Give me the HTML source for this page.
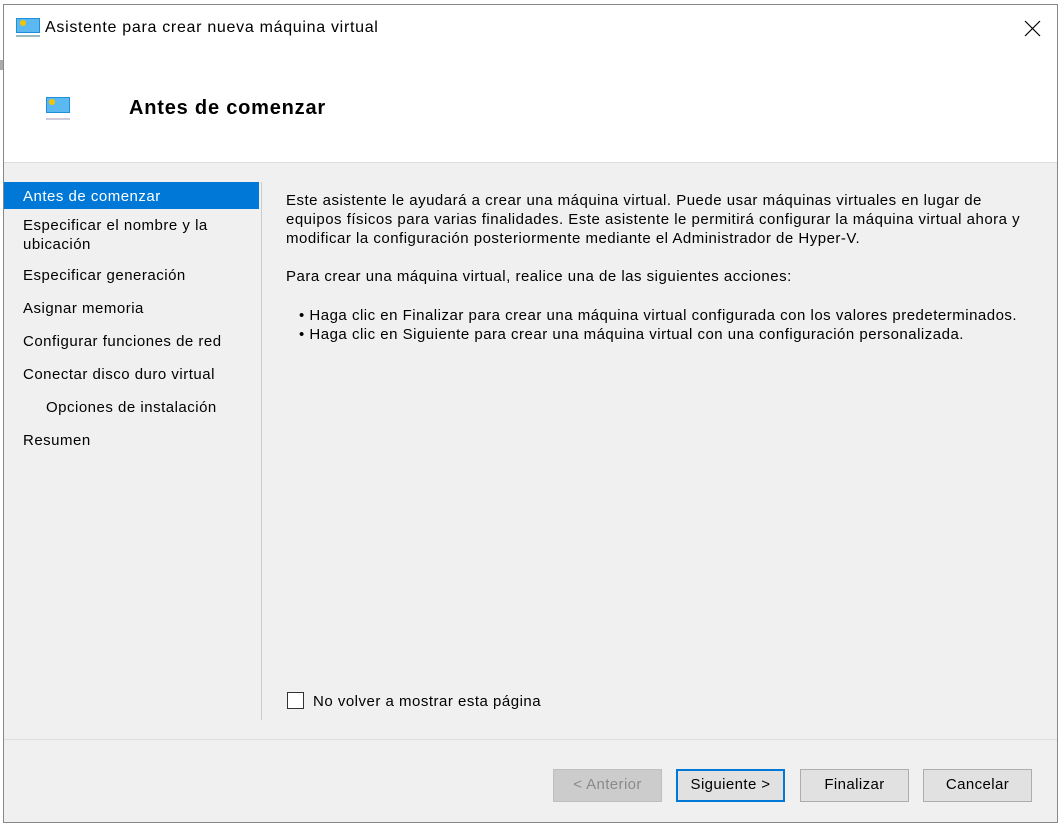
<!DOCTYPE html>
<html><head><meta charset="utf-8"><style>
body{margin:0;width:1063px;height:827px;background:#e8e8e8;position:relative;overflow:hidden;font-family:"Liberation Sans",sans-serif;color:#000}
.a{position:absolute;white-space:nowrap}
#win{position:absolute;left:3px;top:4px;width:1053px;height:817px;border:1px solid #888;background:#f0f0f0}
.t{font-size:15px;line-height:19px;letter-spacing:0.5px}
.btn{position:absolute;top:764px;width:107px;height:31px;border:1px solid #adadad;background:#e1e1e1;font-size:15px;letter-spacing:0.4px;text-align:center;line-height:31px}
</style></head><body>
<div class="a" style="left:0;top:0;width:1063px;height:827px;background:#fff"></div>
<div class="a" style="left:0;top:60px;width:4px;height:10px;background:#aaa"></div>
<div id="win">
 <div class="a" style="left:0;top:0;width:1053px;height:157px;background:#fff;border-bottom:1px solid #ddd"></div>
 <svg class="a" style="left:12px;top:12px" width="25" height="22"><rect x="0" y="1" width="24" height="15" fill="#1e90d8"/><rect x="1" y="2" width="22" height="13" fill="#5bb8f0"/><circle cx="7" cy="6" r="3" fill="#f5c400"/><rect x="0" y="18" width="24" height="2" fill="#9bb"/></svg>
 <div class="a" style="left:41px;top:14px;font-size:16px;letter-spacing:0.7px">Asistente para crear nueva máquina virtual</div>
 <svg class="a" style="left:1020px;top:15px" width="17" height="17"><path d="M1 1L16 16M16 1L1 16" stroke="#000" stroke-width="1.2"/></svg>
 <svg class="a" style="left:42px;top:92px" width="25" height="25"><rect x="0" y="0" width="24" height="16" fill="#1e90d8"/><rect x="1" y="1" width="22" height="14" fill="#5bb8f0"/><circle cx="6" cy="5" r="3" fill="#f5c400"/><rect x="0" y="21" width="24" height="2" fill="#ccd"/></svg>
 <div class="a" style="left:125px;top:92px;font-size:20px;font-weight:bold;letter-spacing:0.8px">Antes de comenzar</div>
 <div class="a" style="left:0;top:177px;width:255px;height:27px;background:#0078d7"></div>
 <div class="a t" style="left:19px;top:182px;color:#fff">Antes de comenzar</div>
 <div class="a t" style="left:19px;top:211px">Especificar el nombre y la<br>ubicación</div>
 <div class="a t" style="left:19px;top:261px">Especificar generación</div>
 <div class="a t" style="left:19px;top:294px">Asignar memoria</div>
 <div class="a t" style="left:19px;top:327px">Configurar funciones de red</div>
 <div class="a t" style="left:19px;top:360px">Conectar disco duro virtual</div>
 <div class="a t" style="left:42px;top:393px">Opciones de instalación</div>
 <div class="a t" style="left:19px;top:426px">Resumen</div>
 <div class="a" style="left:257px;top:177px;width:1px;height:538px;background:#ccc"></div>
 <div class="a t" style="left:282px;top:186px">Este asistente le ayudará a crear una máquina virtual. Puede usar máquinas virtuales en lugar de<br>equipos físicos para varias finalidades. Este asistente le permitirá configurar la máquina virtual ahora y<br>modificar la configuración posteriormente mediante el Administrador de Hyper-V.</div>
 <div class="a t" style="left:282px;top:262px">Para crear una máquina virtual, realice una de las siguientes acciones:</div>
 <div class="a t" style="left:295px;top:301px">• Haga clic en Finalizar para crear una máquina virtual configurada con los valores predeterminados.<br>• Haga clic en Siguiente para crear una máquina virtual con una configuración personalizada.</div>
 <div class="a" style="left:283px;top:687px;width:15px;height:15px;border:1px solid #333;background:#fff"></div>
 <div class="a t" style="left:309px;top:687px">No volver a mostrar esta página</div>
 <div class="a" style="left:0;top:734px;width:1053px;height:1px;background:#ddd"></div>
 <div class="btn" style="left:549px;background:#ccc;border-color:#bfbfbf;color:#8a8a8a;line-height:30px">&lt; Anterior</div>
 <div class="btn" style="left:672px;width:105px;height:29px;border:2px solid #0078d7;line-height:28px">Siguiente &gt;</div>
 <div class="btn" style="left:796px;line-height:30px">Finalizar</div>
 <div class="btn" style="left:919px;line-height:30px">Cancelar</div>
</div>
</body></html>
